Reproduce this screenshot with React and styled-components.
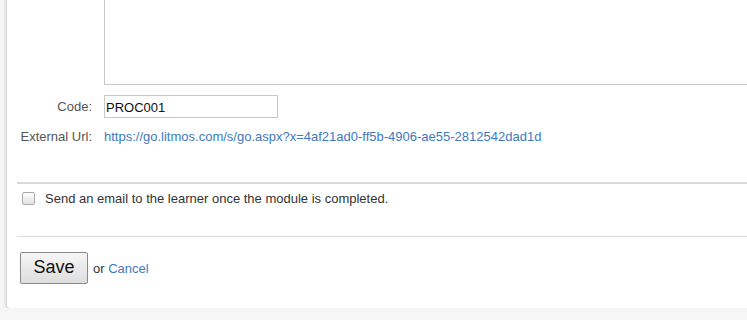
import React from "react";
import styled, { createGlobalStyle } from "styled-components";

const Global = createGlobalStyle`
  html, body { margin: 0; padding: 0; background: #f6f6f6; overflow: hidden; }
  body { font-family: "Liberation Sans", Arial, sans-serif; font-size: 13px; color: #333; }
`;

const Page = styled.div`
  padding-left: 7px;
  width: 760px;
`;

const Card = styled.div`
  background: #fff;
  width: 800px;
  margin-top: -21px;
  padding: 0 0 24px 10px;
  box-shadow: 0 1px 4px rgba(0, 0, 0, 0.28);
  border-radius: 0 0 3px 3px;
`;

const Row = styled.div`
  display: grid;
  grid-template-columns: 75px 1fr;
  column-gap: 12px;
  align-items: ${(p) => (p.$top ? "start" : "center")};
  margin-top: ${(p) => p.$mt || 0}px;
`;

const Label = styled.label`
  text-align: right;
  color: #555;
  line-height: 18px;
`;

const TextArea = styled.div`
  height: 104px;
  border: 1px solid #c8c8c8;
  background: #fff;
`;

const Input = styled.input`
  box-sizing: border-box;
  width: 174px;
  height: 23px;
  border: 1px solid #c8c8c8;
  padding: 2px 2px 0 1px;
  font-family: "Liberation Sans", Arial, sans-serif;
  font-size: 13px;
  color: #111;
  outline: none;
`;

const Link = styled.a`
  color: #4079bd;
  text-decoration: none;
  line-height: 18px;
`;

const Divider = styled.div`
  height: ${(p) => p.$h}px;
  background: ${(p) => p.$c};
  margin-top: ${(p) => p.$mt || 0}px;
`;

const CheckRow = styled.label`
  display: flex;
  align-items: center;
  gap: 10px;
  padding: 7px 0 31px 5px;
  height: 14px;
  color: #333;
`;

const Check = styled.input.attrs({ type: "checkbox" })`
  appearance: none;
  margin: 0;
  width: 13px;
  height: 13px;
  border: 1px solid #a9a9a9;
  border-radius: 2px;
  background: linear-gradient(#fdfdfd, #e2e2e2);
  box-sizing: border-box;
`;

const Actions = styled.div`
  display: flex;
  align-items: center;
  gap: 5px;
  margin-top: 15px;
  padding-left: 3px;
`;

const SaveButton = styled.button`
  width: 68px;
  height: 32px;
  border: 1px solid #8a8a8a;
  border-radius: 2px;
  background: linear-gradient(#f6f6f6, #dedede);
  font-family: "Liberation Sans", Arial, sans-serif;
  font-size: 18px;
  color: #111;
  padding: 0 0 2px;
`;

const Or = styled.span`
  color: #333;
  margin-top: 2px;
`;

export default function App() {
  return (
    <>
      <Global />
      <Page>
        <Card>
          <Row $top>
            <span />
            <TextArea />
          </Row>
          <Row $mt={10}>
            <Label>Code:</Label>
            <Input defaultValue="PROC001" />
          </Row>
          <Row $mt={10}>
            <Label>External Url:</Label>
            <Link href="#">https://go.litmos.com/s/go.aspx?x=4af21ad0-ff5b-4906-ae55-2812542dad1d</Link>
          </Row>
          <Divider $h={2} $c="#d9d9d9" $mt={36} />
          <CheckRow>
            <Check />
            <span>Send an email to the learner once the module is completed.</span>
          </CheckRow>
          <Divider $h={1} $c="#dcdcdc" />
          <Actions>
            <SaveButton>Save</SaveButton>
            <Or>
              or <Link href="#">Cancel</Link>
            </Or>
          </Actions>
        </Card>
      </Page>
    </>
  );
}
